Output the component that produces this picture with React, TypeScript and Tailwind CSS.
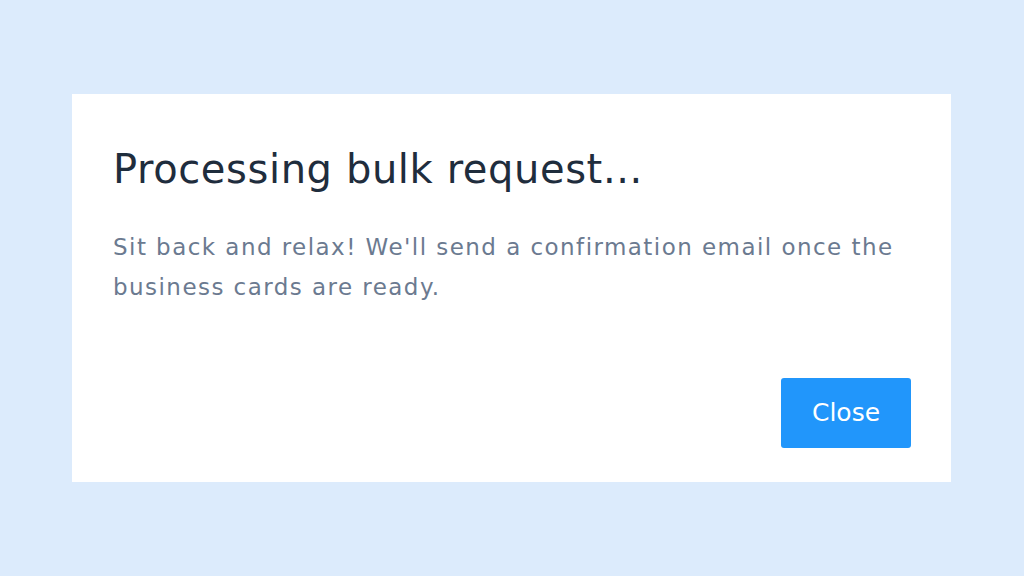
import React from "react";

export default function App() {
  return (
    <div className="w-[1024px] h-[576px] bg-[#dcebfc] pt-[94px] pl-[72px]" style={{ fontFamily: '"DejaVu Sans", sans-serif' }}>
      <div className="w-[879px] h-[388px] bg-white flex flex-col pl-[41px] pr-[40px] pt-[49px]">
        <h1 className="text-[40px] leading-[52px] tracking-[0.6px] text-[#1f2d3d] font-normal">Processing bulk request...</h1>
        <p className="mt-[32px] text-[23px] leading-[40px] tracking-[1.45px] text-[#6b7a90]">
          Sit back and relax! We'll send a confirmation email once the business cards are ready.
        </p>
        <div className="flex justify-end mt-auto mb-[34px]">
          <button className="w-[130px] h-[70px] rounded-[3px] bg-[#2196fb] text-white text-[25px]">Close</button>
        </div>
      </div>
    </div>
  );
}
